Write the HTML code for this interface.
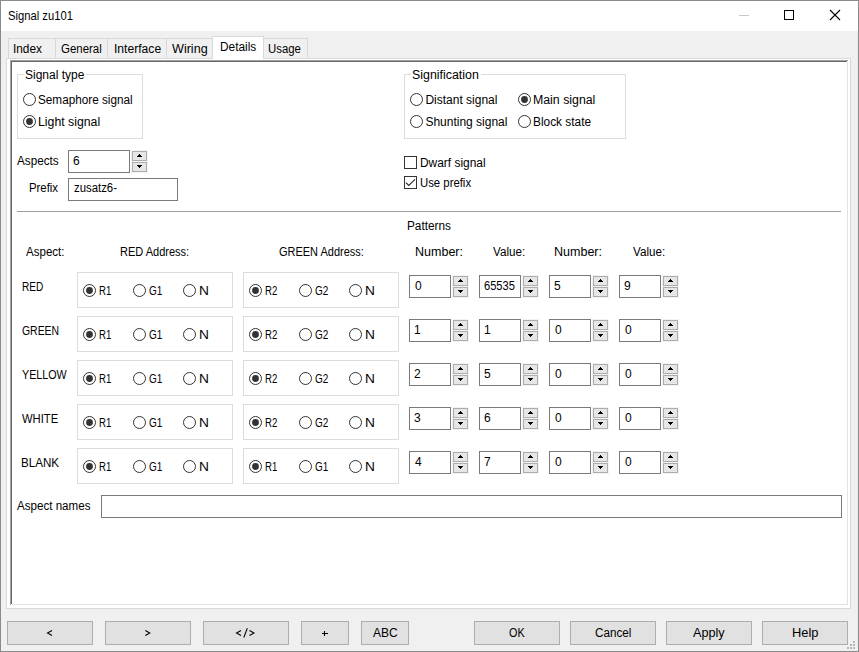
<!DOCTYPE html>
<html><head><meta charset="utf-8"><style>
html,body{margin:0;padding:0;}
body{width:859px;height:652px;overflow:hidden;position:relative;background:#f0f0f0;font-family:"Liberation Sans",sans-serif;}
.a{position:absolute;box-sizing:content-box;}
.t{position:absolute;font-size:12px;line-height:15px;white-space:pre;color:#000;transform-origin:0 0;}
</style></head><body>
<div class="a" style="left:0px;top:0px;width:857px;height:650px;border:1px solid #8a8a8a;background:#f0f0f0"></div>
<div class="a" style="left:1px;top:1px;width:857px;height:30px;background:#fff"></div>
<div class="t" style="left:8.16px;top:9px;transform:scaleX(0.9368)">Signal zu101</div>
<svg class="a" style="left:730px;top:0px" width="120" height="31" viewBox="0 0 120 31"><line x1="9" y1="15.5" x2="19" y2="15.5" stroke="#c8c8c8" stroke-width="1"/><rect x="54.5" y="10.5" width="9" height="9" fill="none" stroke="#000" stroke-width="1"/><path d="M100 10 L110 20 M110 10 L100 20" stroke="#000" stroke-width="1.1"/></svg>
<div class="a" style="left:6px;top:58px;width:843px;height:549px;border:1px solid #d9d9d9;background:#fff"></div>
<div class="a" style="left:8px;top:38px;width:46px;height:19px;border:1px solid #d9d9d9;border-bottom:none;background:#f0f0f0"></div>
<div class="a" style="left:55px;top:38px;width:51px;height:19px;border:1px solid #d9d9d9;border-bottom:none;background:#f0f0f0"></div>
<div class="a" style="left:107px;top:38px;width:58px;height:19px;border:1px solid #d9d9d9;border-bottom:none;background:#f0f0f0"></div>
<div class="a" style="left:166px;top:38px;width:45px;height:19px;border:1px solid #d9d9d9;border-bottom:none;background:#f0f0f0"></div>
<div class="a" style="left:263px;top:38px;width:43px;height:19px;border:1px solid #d9d9d9;border-bottom:none;background:#f0f0f0"></div>
<div class="t" style="left:13.31px;top:42px;transform:scaleX(0.9857)">Index</div>
<div class="t" style="left:61.45px;top:42px;transform:scaleX(0.9537)">General</div>
<div class="t" style="left:113.59px;top:42px;transform:scaleX(1.0089)">Interface</div>
<div class="t" style="left:172.20px;top:42px;transform:scaleX(1.0485)">Wiring</div>
<div class="t" style="left:268.25px;top:42px;transform:scaleX(0.9485)">Usage</div>
<div class="a" style="left:212px;top:36px;width:50px;height:22px;border:1px solid #d9d9d9;border-bottom:none;background:#fff"></div>
<div class="t" style="left:219.61px;top:40px;transform:scaleX(0.9886)">Details</div>
<div class="a" style="left:10px;top:60px;width:1px;height:545px;background:#a0a0a0"></div>
<div class="a" style="left:11px;top:60px;width:837px;height:1px;background:#a0a0a0"></div>
<div class="a" style="left:11px;top:61px;width:1px;height:543px;background:#696969"></div>
<div class="a" style="left:12px;top:61px;width:835px;height:1px;background:#696969"></div>
<div class="a" style="left:12px;top:604px;width:836px;height:1px;background:#e3e3e3"></div>
<div class="a" style="left:847px;top:62px;width:1px;height:542px;background:#e3e3e3"></div>
<div class="a" style="left:17px;top:74px;width:124px;height:63px;border:1px solid #dcdcdc"></div>
<div class="a" style="left:24px;top:68px;width:62px;height:12px;background:#fff"></div>
<div class="t" style="left:25.00px;top:68px">Signal type</div>
<svg class="a" style="left:23px;top:93px" width="13" height="13" viewBox="0 0 13 13"><circle cx="6.5" cy="6.5" r="6" fill="#fff" stroke="#333" stroke-width="1"/></svg>
<div class="t" style="left:38.32px;top:93px;transform:scaleX(0.9779)">Semaphore signal</div>
<svg class="a" style="left:23px;top:115px" width="13" height="13" viewBox="0 0 13 13"><circle cx="6.5" cy="6.5" r="6" fill="#fff" stroke="#333" stroke-width="1"/><circle cx="6.5" cy="6.5" r="3.4" fill="#333"/></svg>
<div class="t" style="left:38.08px;top:115px;transform:scaleX(1.0237)">Light signal</div>
<div class="a" style="left:404px;top:74px;width:220px;height:63px;border:1px solid #dcdcdc"></div>
<div class="a" style="left:411px;top:68px;width:70px;height:12px;background:#fff"></div>
<div class="t" style="left:412.17px;top:68px;transform:scaleX(1.0333)">Signification</div>
<svg class="a" style="left:410px;top:93px" width="13" height="13" viewBox="0 0 13 13"><circle cx="6.5" cy="6.5" r="6" fill="#fff" stroke="#333" stroke-width="1"/></svg>
<div class="t" style="left:425.40px;top:93px">Distant signal</div>
<svg class="a" style="left:518px;top:93px" width="13" height="13" viewBox="0 0 13 13"><circle cx="6.5" cy="6.5" r="6" fill="#fff" stroke="#333" stroke-width="1"/><circle cx="6.5" cy="6.5" r="3.4" fill="#333"/></svg>
<div class="t" style="left:533.17px;top:93px;transform:scaleX(1.0271)">Main signal</div>
<svg class="a" style="left:410px;top:115px" width="13" height="13" viewBox="0 0 13 13"><circle cx="6.5" cy="6.5" r="6" fill="#fff" stroke="#333" stroke-width="1"/></svg>
<div class="t" style="left:425.40px;top:115px">Shunting signal</div>
<svg class="a" style="left:518px;top:115px" width="13" height="13" viewBox="0 0 13 13"><circle cx="6.5" cy="6.5" r="6" fill="#fff" stroke="#333" stroke-width="1"/></svg>
<div class="t" style="left:533.21px;top:115px;transform:scaleX(0.9895)">Block state</div>
<div class="t" style="left:17.10px;top:154px;transform:scaleX(0.9738)">Aspects</div>
<div class="a" style="left:68px;top:150px;width:60px;height:21px;border:1px solid #7a7a7a;background:#fff"></div>
<div class="a" style="left:131px;top:150px;width:17px;height:23px;background:#f3f3f3"></div>
<div class="a" style="left:132px;top:151px;width:13px;height:8px;border:1px solid #adadad;background:#e6e6e6"></div>
<div class="a" style="left:132px;top:162px;width:13px;height:8px;border:1px solid #adadad;background:#e6e6e6"></div>
<svg class="a" style="left:132px;top:151px" width="15" height="21" viewBox="0 0 15 21" shape-rendering="crispEdges"><rect x="7" y="3" width="1" height="1" fill="#000"/><rect x="6" y="4" width="3" height="1" fill="#000"/><rect x="5" y="5" width="5" height="1" fill="#000"/><rect x="5" y="14" width="5" height="1" fill="#000"/><rect x="6" y="15" width="3" height="1" fill="#000"/><rect x="7" y="16" width="1" height="1" fill="#000"/></svg>
<div class="t" style="left:73.00px;top:154px">6</div>
<div class="t" style="left:28.65px;top:181px;transform:scaleX(0.9467)">Prefix</div>
<div class="a" style="left:68px;top:178px;width:108px;height:21px;border:1px solid #7a7a7a;background:#fff"></div>
<div class="t" style="left:74.10px;top:181px;transform:scaleX(0.9467)">zusatz6-</div>
<svg class="a" style="left:404px;top:156px" width="13" height="13" viewBox="0 0 13 13"><rect x="0.5" y="0.5" width="12" height="12" fill="#fff" stroke="#333" stroke-width="1"/></svg>
<div class="t" style="left:419.81px;top:156px;transform:scaleX(0.9938)">Dwarf signal</div>
<svg class="a" style="left:404px;top:176px" width="13" height="13" viewBox="0 0 13 13"><rect x="0.5" y="0.5" width="12" height="12" fill="#fff" stroke="#333" stroke-width="1"/><path d="M2 6.8 L4.8 9.5 L11 3.3" fill="none" stroke="#333" stroke-width="1.2"/></svg>
<div class="t" style="left:419.85px;top:176px;transform:scaleX(0.9453)">Use prefix</div>
<div class="a" style="left:17px;top:211px;width:824px;height:1px;background:#a0a0a0"></div>
<div class="t" style="left:407.42px;top:219px;transform:scaleX(0.9814)">Patterns</div>
<div class="t" style="left:25.60px;top:245px;transform:scaleX(0.9615)">Aspect:</div>
<div class="t" style="left:120.08px;top:245px;transform:scaleX(0.9178)">RED Address:</div>
<div class="t" style="left:278.89px;top:245px;transform:scaleX(0.9143)">GREEN Address:</div>
<div class="t" style="left:414.86px;top:245px;transform:scaleX(1.0432)">Number:</div>
<div class="t" style="left:492.80px;top:245px;transform:scaleX(0.9719)">Value:</div>
<div class="t" style="left:554.26px;top:245px;transform:scaleX(1.0432)">Number:</div>
<div class="t" style="left:633.00px;top:245px;transform:scaleX(0.9719)">Value:</div>
<div class="t" style="left:21.56px;top:280px;transform:scaleX(0.8417)">RED</div>
<div class="a" style="left:77px;top:272px;width:154px;height:34px;border:1px solid #dcdcdc"></div>
<svg class="a" style="left:83px;top:284px" width="13" height="13" viewBox="0 0 13 13"><circle cx="6.5" cy="6.5" r="6" fill="#fff" stroke="#333" stroke-width="1"/><circle cx="6.5" cy="6.5" r="3.4" fill="#333"/></svg>
<div class="t" style="left:99.10px;top:284px;transform:scaleX(0.8000)">R1</div>
<svg class="a" style="left:133px;top:284px" width="13" height="13" viewBox="0 0 13 13"><circle cx="6.5" cy="6.5" r="6" fill="#fff" stroke="#333" stroke-width="1"/></svg>
<div class="t" style="left:149.07px;top:284px;transform:scaleX(0.8333)">G1</div>
<svg class="a" style="left:183px;top:284px" width="13" height="13" viewBox="0 0 13 13"><circle cx="6.5" cy="6.5" r="6" fill="#fff" stroke="#333" stroke-width="1"/></svg>
<div class="t" style="left:198.76px;top:284px;transform:scaleX(1.1429)">N</div>
<div class="a" style="left:243px;top:272px;width:154px;height:34px;border:1px solid #dcdcdc"></div>
<svg class="a" style="left:249px;top:284px" width="13" height="13" viewBox="0 0 13 13"><circle cx="6.5" cy="6.5" r="6" fill="#fff" stroke="#333" stroke-width="1"/><circle cx="6.5" cy="6.5" r="3.4" fill="#333"/></svg>
<div class="t" style="left:265.10px;top:284px;transform:scaleX(0.8000)">R2</div>
<svg class="a" style="left:299px;top:284px" width="13" height="13" viewBox="0 0 13 13"><circle cx="6.5" cy="6.5" r="6" fill="#fff" stroke="#333" stroke-width="1"/></svg>
<div class="t" style="left:315.07px;top:284px;transform:scaleX(0.8333)">G2</div>
<svg class="a" style="left:349px;top:284px" width="13" height="13" viewBox="0 0 13 13"><circle cx="6.5" cy="6.5" r="6" fill="#fff" stroke="#333" stroke-width="1"/></svg>
<div class="t" style="left:364.76px;top:284px;transform:scaleX(1.1429)">N</div>
<div class="a" style="left:409px;top:275px;width:40px;height:21px;border:1px solid #7a7a7a;background:#fff"></div>
<div class="a" style="left:452px;top:275px;width:17px;height:23px;background:#f3f3f3"></div>
<div class="a" style="left:453px;top:276px;width:13px;height:8px;border:1px solid #adadad;background:#e6e6e6"></div>
<div class="a" style="left:453px;top:287px;width:13px;height:8px;border:1px solid #adadad;background:#e6e6e6"></div>
<svg class="a" style="left:453px;top:276px" width="15" height="21" viewBox="0 0 15 21" shape-rendering="crispEdges"><rect x="7" y="3" width="1" height="1" fill="#000"/><rect x="6" y="4" width="3" height="1" fill="#000"/><rect x="5" y="5" width="5" height="1" fill="#000"/><rect x="5" y="14" width="5" height="1" fill="#000"/><rect x="6" y="15" width="3" height="1" fill="#000"/><rect x="7" y="16" width="1" height="1" fill="#000"/></svg>
<div class="t" style="left:415.00px;top:279px">0</div>
<div class="a" style="left:479px;top:275px;width:40px;height:21px;border:1px solid #7a7a7a;background:#fff"></div>
<div class="a" style="left:522px;top:275px;width:17px;height:23px;background:#f3f3f3"></div>
<div class="a" style="left:523px;top:276px;width:13px;height:8px;border:1px solid #adadad;background:#e6e6e6"></div>
<div class="a" style="left:523px;top:287px;width:13px;height:8px;border:1px solid #adadad;background:#e6e6e6"></div>
<svg class="a" style="left:523px;top:276px" width="15" height="21" viewBox="0 0 15 21" shape-rendering="crispEdges"><rect x="7" y="3" width="1" height="1" fill="#000"/><rect x="6" y="4" width="3" height="1" fill="#000"/><rect x="5" y="5" width="5" height="1" fill="#000"/><rect x="5" y="14" width="5" height="1" fill="#000"/><rect x="6" y="15" width="3" height="1" fill="#000"/><rect x="7" y="16" width="1" height="1" fill="#000"/></svg>
<div class="t" style="left:484.07px;top:279px;transform:scaleX(0.9250)">65535</div>
<div class="a" style="left:549px;top:275px;width:40px;height:21px;border:1px solid #7a7a7a;background:#fff"></div>
<div class="a" style="left:592px;top:275px;width:17px;height:23px;background:#f3f3f3"></div>
<div class="a" style="left:593px;top:276px;width:13px;height:8px;border:1px solid #adadad;background:#e6e6e6"></div>
<div class="a" style="left:593px;top:287px;width:13px;height:8px;border:1px solid #adadad;background:#e6e6e6"></div>
<svg class="a" style="left:593px;top:276px" width="15" height="21" viewBox="0 0 15 21" shape-rendering="crispEdges"><rect x="7" y="3" width="1" height="1" fill="#000"/><rect x="6" y="4" width="3" height="1" fill="#000"/><rect x="5" y="5" width="5" height="1" fill="#000"/><rect x="5" y="14" width="5" height="1" fill="#000"/><rect x="6" y="15" width="3" height="1" fill="#000"/><rect x="7" y="16" width="1" height="1" fill="#000"/></svg>
<div class="t" style="left:554.00px;top:279px">5</div>
<div class="a" style="left:619px;top:275px;width:40px;height:21px;border:1px solid #7a7a7a;background:#fff"></div>
<div class="a" style="left:662px;top:275px;width:17px;height:23px;background:#f3f3f3"></div>
<div class="a" style="left:663px;top:276px;width:13px;height:8px;border:1px solid #adadad;background:#e6e6e6"></div>
<div class="a" style="left:663px;top:287px;width:13px;height:8px;border:1px solid #adadad;background:#e6e6e6"></div>
<svg class="a" style="left:663px;top:276px" width="15" height="21" viewBox="0 0 15 21" shape-rendering="crispEdges"><rect x="7" y="3" width="1" height="1" fill="#000"/><rect x="6" y="4" width="3" height="1" fill="#000"/><rect x="5" y="5" width="5" height="1" fill="#000"/><rect x="5" y="14" width="5" height="1" fill="#000"/><rect x="6" y="15" width="3" height="1" fill="#000"/><rect x="7" y="16" width="1" height="1" fill="#000"/></svg>
<div class="t" style="left:624.00px;top:279px">9</div>
<div class="t" style="left:21.53px;top:324px;transform:scaleX(0.8683)">GREEN</div>
<div class="a" style="left:77px;top:316px;width:154px;height:34px;border:1px solid #dcdcdc"></div>
<svg class="a" style="left:83px;top:328px" width="13" height="13" viewBox="0 0 13 13"><circle cx="6.5" cy="6.5" r="6" fill="#fff" stroke="#333" stroke-width="1"/><circle cx="6.5" cy="6.5" r="3.4" fill="#333"/></svg>
<div class="t" style="left:99.10px;top:328px;transform:scaleX(0.8000)">R1</div>
<svg class="a" style="left:133px;top:328px" width="13" height="13" viewBox="0 0 13 13"><circle cx="6.5" cy="6.5" r="6" fill="#fff" stroke="#333" stroke-width="1"/></svg>
<div class="t" style="left:149.07px;top:328px;transform:scaleX(0.8333)">G1</div>
<svg class="a" style="left:183px;top:328px" width="13" height="13" viewBox="0 0 13 13"><circle cx="6.5" cy="6.5" r="6" fill="#fff" stroke="#333" stroke-width="1"/></svg>
<div class="t" style="left:198.76px;top:328px;transform:scaleX(1.1429)">N</div>
<div class="a" style="left:243px;top:316px;width:154px;height:34px;border:1px solid #dcdcdc"></div>
<svg class="a" style="left:249px;top:328px" width="13" height="13" viewBox="0 0 13 13"><circle cx="6.5" cy="6.5" r="6" fill="#fff" stroke="#333" stroke-width="1"/><circle cx="6.5" cy="6.5" r="3.4" fill="#333"/></svg>
<div class="t" style="left:265.10px;top:328px;transform:scaleX(0.8000)">R2</div>
<svg class="a" style="left:299px;top:328px" width="13" height="13" viewBox="0 0 13 13"><circle cx="6.5" cy="6.5" r="6" fill="#fff" stroke="#333" stroke-width="1"/></svg>
<div class="t" style="left:315.07px;top:328px;transform:scaleX(0.8333)">G2</div>
<svg class="a" style="left:349px;top:328px" width="13" height="13" viewBox="0 0 13 13"><circle cx="6.5" cy="6.5" r="6" fill="#fff" stroke="#333" stroke-width="1"/></svg>
<div class="t" style="left:364.76px;top:328px;transform:scaleX(1.1429)">N</div>
<div class="a" style="left:409px;top:319px;width:40px;height:21px;border:1px solid #7a7a7a;background:#fff"></div>
<div class="a" style="left:452px;top:319px;width:17px;height:23px;background:#f3f3f3"></div>
<div class="a" style="left:453px;top:320px;width:13px;height:8px;border:1px solid #adadad;background:#e6e6e6"></div>
<div class="a" style="left:453px;top:331px;width:13px;height:8px;border:1px solid #adadad;background:#e6e6e6"></div>
<svg class="a" style="left:453px;top:320px" width="15" height="21" viewBox="0 0 15 21" shape-rendering="crispEdges"><rect x="7" y="3" width="1" height="1" fill="#000"/><rect x="6" y="4" width="3" height="1" fill="#000"/><rect x="5" y="5" width="5" height="1" fill="#000"/><rect x="5" y="14" width="5" height="1" fill="#000"/><rect x="6" y="15" width="3" height="1" fill="#000"/><rect x="7" y="16" width="1" height="1" fill="#000"/></svg>
<div class="t" style="left:414.00px;top:323px">1</div>
<div class="a" style="left:479px;top:319px;width:40px;height:21px;border:1px solid #7a7a7a;background:#fff"></div>
<div class="a" style="left:522px;top:319px;width:17px;height:23px;background:#f3f3f3"></div>
<div class="a" style="left:523px;top:320px;width:13px;height:8px;border:1px solid #adadad;background:#e6e6e6"></div>
<div class="a" style="left:523px;top:331px;width:13px;height:8px;border:1px solid #adadad;background:#e6e6e6"></div>
<svg class="a" style="left:523px;top:320px" width="15" height="21" viewBox="0 0 15 21" shape-rendering="crispEdges"><rect x="7" y="3" width="1" height="1" fill="#000"/><rect x="6" y="4" width="3" height="1" fill="#000"/><rect x="5" y="5" width="5" height="1" fill="#000"/><rect x="5" y="14" width="5" height="1" fill="#000"/><rect x="6" y="15" width="3" height="1" fill="#000"/><rect x="7" y="16" width="1" height="1" fill="#000"/></svg>
<div class="t" style="left:484.00px;top:323px">1</div>
<div class="a" style="left:549px;top:319px;width:40px;height:21px;border:1px solid #7a7a7a;background:#fff"></div>
<div class="a" style="left:592px;top:319px;width:17px;height:23px;background:#f3f3f3"></div>
<div class="a" style="left:593px;top:320px;width:13px;height:8px;border:1px solid #adadad;background:#e6e6e6"></div>
<div class="a" style="left:593px;top:331px;width:13px;height:8px;border:1px solid #adadad;background:#e6e6e6"></div>
<svg class="a" style="left:593px;top:320px" width="15" height="21" viewBox="0 0 15 21" shape-rendering="crispEdges"><rect x="7" y="3" width="1" height="1" fill="#000"/><rect x="6" y="4" width="3" height="1" fill="#000"/><rect x="5" y="5" width="5" height="1" fill="#000"/><rect x="5" y="14" width="5" height="1" fill="#000"/><rect x="6" y="15" width="3" height="1" fill="#000"/><rect x="7" y="16" width="1" height="1" fill="#000"/></svg>
<div class="t" style="left:555.00px;top:323px">0</div>
<div class="a" style="left:619px;top:319px;width:40px;height:21px;border:1px solid #7a7a7a;background:#fff"></div>
<div class="a" style="left:662px;top:319px;width:17px;height:23px;background:#f3f3f3"></div>
<div class="a" style="left:663px;top:320px;width:13px;height:8px;border:1px solid #adadad;background:#e6e6e6"></div>
<div class="a" style="left:663px;top:331px;width:13px;height:8px;border:1px solid #adadad;background:#e6e6e6"></div>
<svg class="a" style="left:663px;top:320px" width="15" height="21" viewBox="0 0 15 21" shape-rendering="crispEdges"><rect x="7" y="3" width="1" height="1" fill="#000"/><rect x="6" y="4" width="3" height="1" fill="#000"/><rect x="5" y="5" width="5" height="1" fill="#000"/><rect x="5" y="14" width="5" height="1" fill="#000"/><rect x="6" y="15" width="3" height="1" fill="#000"/><rect x="7" y="16" width="1" height="1" fill="#000"/></svg>
<div class="t" style="left:625.00px;top:323px">0</div>
<div class="t" style="left:22.40px;top:368px;transform:scaleX(0.8940)">YELLOW</div>
<div class="a" style="left:77px;top:360px;width:154px;height:34px;border:1px solid #dcdcdc"></div>
<svg class="a" style="left:83px;top:372px" width="13" height="13" viewBox="0 0 13 13"><circle cx="6.5" cy="6.5" r="6" fill="#fff" stroke="#333" stroke-width="1"/><circle cx="6.5" cy="6.5" r="3.4" fill="#333"/></svg>
<div class="t" style="left:99.10px;top:372px;transform:scaleX(0.8000)">R1</div>
<svg class="a" style="left:133px;top:372px" width="13" height="13" viewBox="0 0 13 13"><circle cx="6.5" cy="6.5" r="6" fill="#fff" stroke="#333" stroke-width="1"/></svg>
<div class="t" style="left:149.07px;top:372px;transform:scaleX(0.8333)">G1</div>
<svg class="a" style="left:183px;top:372px" width="13" height="13" viewBox="0 0 13 13"><circle cx="6.5" cy="6.5" r="6" fill="#fff" stroke="#333" stroke-width="1"/></svg>
<div class="t" style="left:198.76px;top:372px;transform:scaleX(1.1429)">N</div>
<div class="a" style="left:243px;top:360px;width:154px;height:34px;border:1px solid #dcdcdc"></div>
<svg class="a" style="left:249px;top:372px" width="13" height="13" viewBox="0 0 13 13"><circle cx="6.5" cy="6.5" r="6" fill="#fff" stroke="#333" stroke-width="1"/><circle cx="6.5" cy="6.5" r="3.4" fill="#333"/></svg>
<div class="t" style="left:265.10px;top:372px;transform:scaleX(0.8000)">R2</div>
<svg class="a" style="left:299px;top:372px" width="13" height="13" viewBox="0 0 13 13"><circle cx="6.5" cy="6.5" r="6" fill="#fff" stroke="#333" stroke-width="1"/></svg>
<div class="t" style="left:315.07px;top:372px;transform:scaleX(0.8333)">G2</div>
<svg class="a" style="left:349px;top:372px" width="13" height="13" viewBox="0 0 13 13"><circle cx="6.5" cy="6.5" r="6" fill="#fff" stroke="#333" stroke-width="1"/></svg>
<div class="t" style="left:364.76px;top:372px;transform:scaleX(1.1429)">N</div>
<div class="a" style="left:409px;top:363px;width:40px;height:21px;border:1px solid #7a7a7a;background:#fff"></div>
<div class="a" style="left:452px;top:363px;width:17px;height:23px;background:#f3f3f3"></div>
<div class="a" style="left:453px;top:364px;width:13px;height:8px;border:1px solid #adadad;background:#e6e6e6"></div>
<div class="a" style="left:453px;top:375px;width:13px;height:8px;border:1px solid #adadad;background:#e6e6e6"></div>
<svg class="a" style="left:453px;top:364px" width="15" height="21" viewBox="0 0 15 21" shape-rendering="crispEdges"><rect x="7" y="3" width="1" height="1" fill="#000"/><rect x="6" y="4" width="3" height="1" fill="#000"/><rect x="5" y="5" width="5" height="1" fill="#000"/><rect x="5" y="14" width="5" height="1" fill="#000"/><rect x="6" y="15" width="3" height="1" fill="#000"/><rect x="7" y="16" width="1" height="1" fill="#000"/></svg>
<div class="t" style="left:414.00px;top:367px">2</div>
<div class="a" style="left:479px;top:363px;width:40px;height:21px;border:1px solid #7a7a7a;background:#fff"></div>
<div class="a" style="left:522px;top:363px;width:17px;height:23px;background:#f3f3f3"></div>
<div class="a" style="left:523px;top:364px;width:13px;height:8px;border:1px solid #adadad;background:#e6e6e6"></div>
<div class="a" style="left:523px;top:375px;width:13px;height:8px;border:1px solid #adadad;background:#e6e6e6"></div>
<svg class="a" style="left:523px;top:364px" width="15" height="21" viewBox="0 0 15 21" shape-rendering="crispEdges"><rect x="7" y="3" width="1" height="1" fill="#000"/><rect x="6" y="4" width="3" height="1" fill="#000"/><rect x="5" y="5" width="5" height="1" fill="#000"/><rect x="5" y="14" width="5" height="1" fill="#000"/><rect x="6" y="15" width="3" height="1" fill="#000"/><rect x="7" y="16" width="1" height="1" fill="#000"/></svg>
<div class="t" style="left:484.00px;top:367px">5</div>
<div class="a" style="left:549px;top:363px;width:40px;height:21px;border:1px solid #7a7a7a;background:#fff"></div>
<div class="a" style="left:592px;top:363px;width:17px;height:23px;background:#f3f3f3"></div>
<div class="a" style="left:593px;top:364px;width:13px;height:8px;border:1px solid #adadad;background:#e6e6e6"></div>
<div class="a" style="left:593px;top:375px;width:13px;height:8px;border:1px solid #adadad;background:#e6e6e6"></div>
<svg class="a" style="left:593px;top:364px" width="15" height="21" viewBox="0 0 15 21" shape-rendering="crispEdges"><rect x="7" y="3" width="1" height="1" fill="#000"/><rect x="6" y="4" width="3" height="1" fill="#000"/><rect x="5" y="5" width="5" height="1" fill="#000"/><rect x="5" y="14" width="5" height="1" fill="#000"/><rect x="6" y="15" width="3" height="1" fill="#000"/><rect x="7" y="16" width="1" height="1" fill="#000"/></svg>
<div class="t" style="left:555.00px;top:367px">0</div>
<div class="a" style="left:619px;top:363px;width:40px;height:21px;border:1px solid #7a7a7a;background:#fff"></div>
<div class="a" style="left:662px;top:363px;width:17px;height:23px;background:#f3f3f3"></div>
<div class="a" style="left:663px;top:364px;width:13px;height:8px;border:1px solid #adadad;background:#e6e6e6"></div>
<div class="a" style="left:663px;top:375px;width:13px;height:8px;border:1px solid #adadad;background:#e6e6e6"></div>
<svg class="a" style="left:663px;top:364px" width="15" height="21" viewBox="0 0 15 21" shape-rendering="crispEdges"><rect x="7" y="3" width="1" height="1" fill="#000"/><rect x="6" y="4" width="3" height="1" fill="#000"/><rect x="5" y="5" width="5" height="1" fill="#000"/><rect x="5" y="14" width="5" height="1" fill="#000"/><rect x="6" y="15" width="3" height="1" fill="#000"/><rect x="7" y="16" width="1" height="1" fill="#000"/></svg>
<div class="t" style="left:625.00px;top:367px">0</div>
<div class="t" style="left:22.40px;top:412px;transform:scaleX(0.9368)">WHITE</div>
<div class="a" style="left:77px;top:404px;width:154px;height:34px;border:1px solid #dcdcdc"></div>
<svg class="a" style="left:83px;top:416px" width="13" height="13" viewBox="0 0 13 13"><circle cx="6.5" cy="6.5" r="6" fill="#fff" stroke="#333" stroke-width="1"/><circle cx="6.5" cy="6.5" r="3.4" fill="#333"/></svg>
<div class="t" style="left:99.10px;top:416px;transform:scaleX(0.8000)">R1</div>
<svg class="a" style="left:133px;top:416px" width="13" height="13" viewBox="0 0 13 13"><circle cx="6.5" cy="6.5" r="6" fill="#fff" stroke="#333" stroke-width="1"/></svg>
<div class="t" style="left:149.07px;top:416px;transform:scaleX(0.8333)">G1</div>
<svg class="a" style="left:183px;top:416px" width="13" height="13" viewBox="0 0 13 13"><circle cx="6.5" cy="6.5" r="6" fill="#fff" stroke="#333" stroke-width="1"/></svg>
<div class="t" style="left:198.76px;top:416px;transform:scaleX(1.1429)">N</div>
<div class="a" style="left:243px;top:404px;width:154px;height:34px;border:1px solid #dcdcdc"></div>
<svg class="a" style="left:249px;top:416px" width="13" height="13" viewBox="0 0 13 13"><circle cx="6.5" cy="6.5" r="6" fill="#fff" stroke="#333" stroke-width="1"/><circle cx="6.5" cy="6.5" r="3.4" fill="#333"/></svg>
<div class="t" style="left:265.10px;top:416px;transform:scaleX(0.8000)">R2</div>
<svg class="a" style="left:299px;top:416px" width="13" height="13" viewBox="0 0 13 13"><circle cx="6.5" cy="6.5" r="6" fill="#fff" stroke="#333" stroke-width="1"/></svg>
<div class="t" style="left:315.07px;top:416px;transform:scaleX(0.8333)">G2</div>
<svg class="a" style="left:349px;top:416px" width="13" height="13" viewBox="0 0 13 13"><circle cx="6.5" cy="6.5" r="6" fill="#fff" stroke="#333" stroke-width="1"/></svg>
<div class="t" style="left:364.76px;top:416px;transform:scaleX(1.1429)">N</div>
<div class="a" style="left:409px;top:407px;width:40px;height:21px;border:1px solid #7a7a7a;background:#fff"></div>
<div class="a" style="left:452px;top:407px;width:17px;height:23px;background:#f3f3f3"></div>
<div class="a" style="left:453px;top:408px;width:13px;height:8px;border:1px solid #adadad;background:#e6e6e6"></div>
<div class="a" style="left:453px;top:419px;width:13px;height:8px;border:1px solid #adadad;background:#e6e6e6"></div>
<svg class="a" style="left:453px;top:408px" width="15" height="21" viewBox="0 0 15 21" shape-rendering="crispEdges"><rect x="7" y="3" width="1" height="1" fill="#000"/><rect x="6" y="4" width="3" height="1" fill="#000"/><rect x="5" y="5" width="5" height="1" fill="#000"/><rect x="5" y="14" width="5" height="1" fill="#000"/><rect x="6" y="15" width="3" height="1" fill="#000"/><rect x="7" y="16" width="1" height="1" fill="#000"/></svg>
<div class="t" style="left:414.00px;top:411px">3</div>
<div class="a" style="left:479px;top:407px;width:40px;height:21px;border:1px solid #7a7a7a;background:#fff"></div>
<div class="a" style="left:522px;top:407px;width:17px;height:23px;background:#f3f3f3"></div>
<div class="a" style="left:523px;top:408px;width:13px;height:8px;border:1px solid #adadad;background:#e6e6e6"></div>
<div class="a" style="left:523px;top:419px;width:13px;height:8px;border:1px solid #adadad;background:#e6e6e6"></div>
<svg class="a" style="left:523px;top:408px" width="15" height="21" viewBox="0 0 15 21" shape-rendering="crispEdges"><rect x="7" y="3" width="1" height="1" fill="#000"/><rect x="6" y="4" width="3" height="1" fill="#000"/><rect x="5" y="5" width="5" height="1" fill="#000"/><rect x="5" y="14" width="5" height="1" fill="#000"/><rect x="6" y="15" width="3" height="1" fill="#000"/><rect x="7" y="16" width="1" height="1" fill="#000"/></svg>
<div class="t" style="left:484.00px;top:411px">6</div>
<div class="a" style="left:549px;top:407px;width:40px;height:21px;border:1px solid #7a7a7a;background:#fff"></div>
<div class="a" style="left:592px;top:407px;width:17px;height:23px;background:#f3f3f3"></div>
<div class="a" style="left:593px;top:408px;width:13px;height:8px;border:1px solid #adadad;background:#e6e6e6"></div>
<div class="a" style="left:593px;top:419px;width:13px;height:8px;border:1px solid #adadad;background:#e6e6e6"></div>
<svg class="a" style="left:593px;top:408px" width="15" height="21" viewBox="0 0 15 21" shape-rendering="crispEdges"><rect x="7" y="3" width="1" height="1" fill="#000"/><rect x="6" y="4" width="3" height="1" fill="#000"/><rect x="5" y="5" width="5" height="1" fill="#000"/><rect x="5" y="14" width="5" height="1" fill="#000"/><rect x="6" y="15" width="3" height="1" fill="#000"/><rect x="7" y="16" width="1" height="1" fill="#000"/></svg>
<div class="t" style="left:555.00px;top:411px">0</div>
<div class="a" style="left:619px;top:407px;width:40px;height:21px;border:1px solid #7a7a7a;background:#fff"></div>
<div class="a" style="left:662px;top:407px;width:17px;height:23px;background:#f3f3f3"></div>
<div class="a" style="left:663px;top:408px;width:13px;height:8px;border:1px solid #adadad;background:#e6e6e6"></div>
<div class="a" style="left:663px;top:419px;width:13px;height:8px;border:1px solid #adadad;background:#e6e6e6"></div>
<svg class="a" style="left:663px;top:408px" width="15" height="21" viewBox="0 0 15 21" shape-rendering="crispEdges"><rect x="7" y="3" width="1" height="1" fill="#000"/><rect x="6" y="4" width="3" height="1" fill="#000"/><rect x="5" y="5" width="5" height="1" fill="#000"/><rect x="5" y="14" width="5" height="1" fill="#000"/><rect x="6" y="15" width="3" height="1" fill="#000"/><rect x="7" y="16" width="1" height="1" fill="#000"/></svg>
<div class="t" style="left:625.00px;top:411px">0</div>
<div class="t" style="left:21.43px;top:456px;transform:scaleX(0.9684)">BLANK</div>
<div class="a" style="left:77px;top:448px;width:154px;height:34px;border:1px solid #dcdcdc"></div>
<svg class="a" style="left:83px;top:460px" width="13" height="13" viewBox="0 0 13 13"><circle cx="6.5" cy="6.5" r="6" fill="#fff" stroke="#333" stroke-width="1"/><circle cx="6.5" cy="6.5" r="3.4" fill="#333"/></svg>
<div class="t" style="left:99.10px;top:460px;transform:scaleX(0.8000)">R1</div>
<svg class="a" style="left:133px;top:460px" width="13" height="13" viewBox="0 0 13 13"><circle cx="6.5" cy="6.5" r="6" fill="#fff" stroke="#333" stroke-width="1"/></svg>
<div class="t" style="left:149.07px;top:460px;transform:scaleX(0.8333)">G1</div>
<svg class="a" style="left:183px;top:460px" width="13" height="13" viewBox="0 0 13 13"><circle cx="6.5" cy="6.5" r="6" fill="#fff" stroke="#333" stroke-width="1"/></svg>
<div class="t" style="left:198.76px;top:460px;transform:scaleX(1.1429)">N</div>
<div class="a" style="left:243px;top:448px;width:154px;height:34px;border:1px solid #dcdcdc"></div>
<svg class="a" style="left:249px;top:460px" width="13" height="13" viewBox="0 0 13 13"><circle cx="6.5" cy="6.5" r="6" fill="#fff" stroke="#333" stroke-width="1"/><circle cx="6.5" cy="6.5" r="3.4" fill="#333"/></svg>
<div class="t" style="left:265.10px;top:460px;transform:scaleX(0.8000)">R1</div>
<svg class="a" style="left:299px;top:460px" width="13" height="13" viewBox="0 0 13 13"><circle cx="6.5" cy="6.5" r="6" fill="#fff" stroke="#333" stroke-width="1"/></svg>
<div class="t" style="left:315.07px;top:460px;transform:scaleX(0.8333)">G1</div>
<svg class="a" style="left:349px;top:460px" width="13" height="13" viewBox="0 0 13 13"><circle cx="6.5" cy="6.5" r="6" fill="#fff" stroke="#333" stroke-width="1"/></svg>
<div class="t" style="left:364.76px;top:460px;transform:scaleX(1.1429)">N</div>
<div class="a" style="left:409px;top:451px;width:40px;height:21px;border:1px solid #7a7a7a;background:#fff"></div>
<div class="a" style="left:452px;top:451px;width:17px;height:23px;background:#f3f3f3"></div>
<div class="a" style="left:453px;top:452px;width:13px;height:8px;border:1px solid #adadad;background:#e6e6e6"></div>
<div class="a" style="left:453px;top:463px;width:13px;height:8px;border:1px solid #adadad;background:#e6e6e6"></div>
<svg class="a" style="left:453px;top:452px" width="15" height="21" viewBox="0 0 15 21" shape-rendering="crispEdges"><rect x="7" y="3" width="1" height="1" fill="#000"/><rect x="6" y="4" width="3" height="1" fill="#000"/><rect x="5" y="5" width="5" height="1" fill="#000"/><rect x="5" y="14" width="5" height="1" fill="#000"/><rect x="6" y="15" width="3" height="1" fill="#000"/><rect x="7" y="16" width="1" height="1" fill="#000"/></svg>
<div class="t" style="left:415.00px;top:455px">4</div>
<div class="a" style="left:479px;top:451px;width:40px;height:21px;border:1px solid #7a7a7a;background:#fff"></div>
<div class="a" style="left:522px;top:451px;width:17px;height:23px;background:#f3f3f3"></div>
<div class="a" style="left:523px;top:452px;width:13px;height:8px;border:1px solid #adadad;background:#e6e6e6"></div>
<div class="a" style="left:523px;top:463px;width:13px;height:8px;border:1px solid #adadad;background:#e6e6e6"></div>
<svg class="a" style="left:523px;top:452px" width="15" height="21" viewBox="0 0 15 21" shape-rendering="crispEdges"><rect x="7" y="3" width="1" height="1" fill="#000"/><rect x="6" y="4" width="3" height="1" fill="#000"/><rect x="5" y="5" width="5" height="1" fill="#000"/><rect x="5" y="14" width="5" height="1" fill="#000"/><rect x="6" y="15" width="3" height="1" fill="#000"/><rect x="7" y="16" width="1" height="1" fill="#000"/></svg>
<div class="t" style="left:484.00px;top:455px">7</div>
<div class="a" style="left:549px;top:451px;width:40px;height:21px;border:1px solid #7a7a7a;background:#fff"></div>
<div class="a" style="left:592px;top:451px;width:17px;height:23px;background:#f3f3f3"></div>
<div class="a" style="left:593px;top:452px;width:13px;height:8px;border:1px solid #adadad;background:#e6e6e6"></div>
<div class="a" style="left:593px;top:463px;width:13px;height:8px;border:1px solid #adadad;background:#e6e6e6"></div>
<svg class="a" style="left:593px;top:452px" width="15" height="21" viewBox="0 0 15 21" shape-rendering="crispEdges"><rect x="7" y="3" width="1" height="1" fill="#000"/><rect x="6" y="4" width="3" height="1" fill="#000"/><rect x="5" y="5" width="5" height="1" fill="#000"/><rect x="5" y="14" width="5" height="1" fill="#000"/><rect x="6" y="15" width="3" height="1" fill="#000"/><rect x="7" y="16" width="1" height="1" fill="#000"/></svg>
<div class="t" style="left:555.00px;top:455px">0</div>
<div class="a" style="left:619px;top:451px;width:40px;height:21px;border:1px solid #7a7a7a;background:#fff"></div>
<div class="a" style="left:662px;top:451px;width:17px;height:23px;background:#f3f3f3"></div>
<div class="a" style="left:663px;top:452px;width:13px;height:8px;border:1px solid #adadad;background:#e6e6e6"></div>
<div class="a" style="left:663px;top:463px;width:13px;height:8px;border:1px solid #adadad;background:#e6e6e6"></div>
<svg class="a" style="left:663px;top:452px" width="15" height="21" viewBox="0 0 15 21" shape-rendering="crispEdges"><rect x="7" y="3" width="1" height="1" fill="#000"/><rect x="6" y="4" width="3" height="1" fill="#000"/><rect x="5" y="5" width="5" height="1" fill="#000"/><rect x="5" y="14" width="5" height="1" fill="#000"/><rect x="6" y="15" width="3" height="1" fill="#000"/><rect x="7" y="16" width="1" height="1" fill="#000"/></svg>
<div class="t" style="left:625.00px;top:455px">0</div>
<div class="t" style="left:17.30px;top:499px;transform:scaleX(0.9658)">Aspect names</div>
<div class="a" style="left:101px;top:495px;width:739px;height:21px;border:1px solid #7a7a7a;background:#fff"></div>
<div class="a" style="left:7px;top:621px;width:84px;height:22px;border:1px solid #adadad;background:#e1e1e1"></div>
<svg class="a" style="left:0;top:0" width="859" height="652" viewBox="0 0 859 652"><path d="M52 630.5 L47.5 633 L52 635.5" fill="none" stroke="#000" stroke-width="1.05"/></svg>
<div class="a" style="left:105px;top:621px;width:84px;height:22px;border:1px solid #adadad;background:#e1e1e1"></div>
<svg class="a" style="left:0;top:0" width="859" height="652" viewBox="0 0 859 652"><path d="M145.3 630.5 L149.8 633 L145.3 635.5" fill="none" stroke="#000" stroke-width="1.05"/></svg>
<div class="a" style="left:203px;top:621px;width:84px;height:22px;border:1px solid #adadad;background:#e1e1e1"></div>
<svg class="a" style="left:0;top:0" width="859" height="652" viewBox="0 0 859 652"><path d="M241 630.5 L236.5 633 L241 635.5 M243.8 637.5 L247.3 628.3 M249.5 630.5 L254 633 L249.5 635.5" fill="none" stroke="#000" stroke-width="1.05"/></svg>
<div class="a" style="left:301px;top:621px;width:46px;height:22px;border:1px solid #adadad;background:#e1e1e1"></div>
<svg class="a" style="left:0;top:0" width="859" height="652" viewBox="0 0 859 652"><path d="M322 633.5 L328 633.5 M324.5 631 L324.5 636" fill="none" stroke="#000" stroke-width="1.05"/></svg>
<div class="a" style="left:361px;top:621px;width:46px;height:22px;border:1px solid #adadad;background:#e1e1e1"></div>
<div class="t" style="left:373.00px;top:626px">ABC</div>
<div class="a" style="left:474px;top:621px;width:84px;height:22px;border:1px solid #adadad;background:#e1e1e1"></div>
<div class="t" style="left:509.35px;top:626px;transform:scaleX(0.9000)">OK</div>
<div class="a" style="left:570px;top:621px;width:84px;height:22px;border:1px solid #adadad;background:#e1e1e1"></div>
<div class="t" style="left:594.53px;top:626px;transform:scaleX(0.9722)">Cancel</div>
<div class="a" style="left:666px;top:621px;width:84px;height:22px;border:1px solid #adadad;background:#e1e1e1"></div>
<div class="t" style="left:693.20px;top:626px;transform:scaleX(1.0533)">Apply</div>
<div class="a" style="left:762px;top:621px;width:84px;height:22px;border:1px solid #adadad;background:#e1e1e1"></div>
<div class="t" style="left:791.58px;top:626px;transform:scaleX(1.0739)">Help</div>
<div class="a" style="left:853px;top:641px;width:2px;height:2px;background:#b8b8b8"></div>
<div class="a" style="left:850px;top:644px;width:2px;height:2px;background:#b8b8b8"></div>
<div class="a" style="left:853px;top:644px;width:2px;height:2px;background:#b8b8b8"></div>
<div class="a" style="left:847px;top:647px;width:2px;height:2px;background:#b8b8b8"></div>
<div class="a" style="left:850px;top:647px;width:2px;height:2px;background:#b8b8b8"></div>
<div class="a" style="left:853px;top:647px;width:2px;height:2px;background:#b8b8b8"></div>
</body></html>
